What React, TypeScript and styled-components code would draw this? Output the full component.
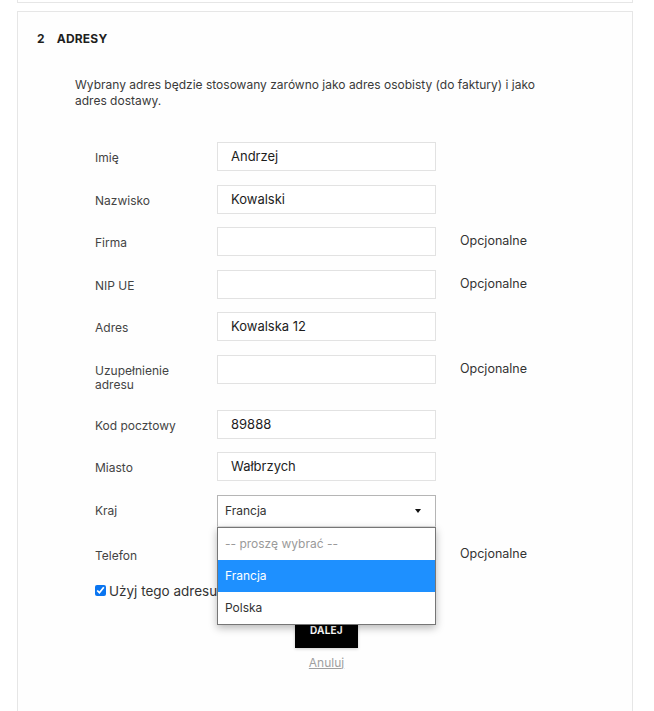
import React from "react";
import styled, { createGlobalStyle } from "styled-components";

const GlobalStyle = createGlobalStyle`
  html, body { margin: 0; padding: 0; background: #ffffff; overflow: hidden; }
  body { font-family: "Inter", "Noto Sans", sans-serif; color: #333; }
  * { box-sizing: border-box; }
`;

const Page = styled.div`
  padding: 0 21px 0 17px;
`;

const PrevCardEdge = styled.div`
  height: 3px;
  border: 1px solid #e6e6e6;
  border-top: none;
  margin-bottom: 8px;
`;

const Card = styled.section`
  border: 1px solid #e6e6e6;
  background: #fefefe;
  padding: 19px 20px 90px 19px;
`;

const Heading = styled.h2`
  margin: 0;
  font-size: 12px;
  line-height: 16px;
  font-weight: 700;
  color: #1f1f1f;
  letter-spacing: 0.2px;
`;

const StepNum = styled.span`
  display: inline-block;
  margin-right: 12px;
`;

const Intro = styled.p`
  margin: 30px 0 0 38px;
  width: 476px;
  font-size: 12px;
  line-height: 16px;
  color: #3a3a3a;
`;

const Form = styled.div`
  margin: 33px 0 0 58px;
  display: flex;
  flex-direction: column;
`;

const FieldRow = styled.div`
  display: grid;
  grid-template-columns: 122px 219px auto;
  align-items: start;
  padding-bottom: 13.5px;
`;

const Label = styled.label`
  font-size: 12px;
  line-height: 14px;
  color: #444;
  padding: 9px 0 4.5px 0;
  width: 90px;
`;

const TextInput = styled.div`
  height: 29px;
  border: 1px solid #e2e2e2;
  background: #fff;
  padding: 0 13px;
  font-size: 13px;
  line-height: 27px;
  color: #1d1d1d;
`;

const Note = styled.span`
  margin-left: 24px;
  font-size: 12.5px;
  line-height: 16px;
  color: #333;
  padding-top: 6px;
`;

const SelectWrap = styled.div`
  position: relative;
`;

const SelectBox = styled.div`
  height: 32px;
  border: 1px solid #b5b5b5;
  border-bottom-color: #e0e0e0;
  background: #fff;
  padding: 0 14px 0 7px;
  display: flex;
  align-items: center;
  justify-content: space-between;
  font-size: 12px;
  color: #333;
`;

const Caret = styled.span`
  width: 0;
  height: 0;
  border-left: 3.5px solid transparent;
  border-right: 3.5px solid transparent;
  border-top: 4px solid #111;
`;

const DropList = styled.ul`
  position: absolute;
  z-index: 10;
  top: 32px;
  left: 0;
  width: 219px;
  margin: 0;
  padding: 0;
  list-style: none;
  background: #fff;
  border: 1px solid #767676;
  box-shadow: 0 3px 8px rgba(0, 0, 0, 0.28);
`;

const Option = styled.li<{ $active?: boolean; $placeholder?: boolean }>`
  height: 32px;
  padding: 0 7px;
  display: flex;
  align-items: center;
  font-size: 12px;
  background: ${(p) => (p.$active ? "#1e90ff" : "transparent")};
  color: ${(p) => (p.$active ? "#fff" : p.$placeholder ? "#9a9a9a" : "#333")};
`;

const CheckRow = styled.label`
  display: flex;
  align-items: center;
  gap: 3px;
  font-size: 13.5px;
  line-height: 16px;
  color: #333;
  white-space: nowrap;
`;

const CheckBox = styled.input`
  width: 11px;
  height: 11px;
  margin: 0;
  accent-color: #0a75f0;
`;

const Actions = styled.div`
  margin: 13px 0 0 122px;
  width: 219px;
  display: flex;
  flex-direction: column;
  align-items: center;
  gap: 7px;
`;

const PrimaryButton = styled.button`
  width: 63px;
  height: 36px;
  border: none;
  background: #000;
  color: #fff;
  font-family: inherit;
  font-size: 10px;
  font-weight: 700;
  letter-spacing: 0.2px;
  box-shadow: 0 1px 3px rgba(0, 0, 0, 0.2);
  padding: 0;
`;

const CancelLink = styled.a`
  font-size: 12px;
  line-height: 16px;
  color: #a0a0a0;
  text-decoration: underline;
`;

type Field = { label: string; value?: string; optional?: boolean };

const fields: Field[] = [
  { label: "Imię", value: "Andrzej" },
  { label: "Nazwisko", value: "Kowalski" },
  { label: "Firma", optional: true },
  { label: "NIP UE", optional: true },
  { label: "Adres", value: "Kowalska 12" },
  { label: "Uzupełnienie adresu", optional: true },
  { label: "Kod pocztowy", value: "89888" },
  { label: "Miasto", value: "Wałbrzych" },
];

export default function App() {
  return (
    <>
      <GlobalStyle />
      <Page>
        <PrevCardEdge />
        <Card>
          <Heading>
            <StepNum>2</StepNum>ADRESY
          </Heading>
          <Intro>
            Wybrany adres będzie stosowany zarówno jako adres osobisty (do faktury) i jako adres dostawy.
          </Intro>
          <Form>
            {fields.map((f) => (
              <FieldRow key={f.label}>
                <Label>{f.label}</Label>
                <TextInput>{f.value}</TextInput>
                {f.optional && <Note>Opcjonalne</Note>}
              </FieldRow>
            ))}
            <FieldRow>
              <Label>Kraj</Label>
              <SelectWrap>
                <SelectBox>
                  <span>Francja</span>
                  <Caret />
                </SelectBox>
                <DropList>
                  <Option $placeholder>-- proszę wybrać --</Option>
                  <Option $active>Francja</Option>
                  <Option>Polska</Option>
                </DropList>
              </SelectWrap>
            </FieldRow>
            <FieldRow>
              <Label>Telefon</Label>
              <TextInput />
              <Note>Opcjonalne</Note>
            </FieldRow>
            <CheckRow>
              <CheckBox type="checkbox" defaultChecked />
              Użyj tego adresu także do faktury
            </CheckRow>
            <Actions>
              <PrimaryButton>DALEJ</PrimaryButton>
              <CancelLink>Anuluj</CancelLink>
            </Actions>
          </Form>
        </Card>
      </Page>
    </>
  );
}
